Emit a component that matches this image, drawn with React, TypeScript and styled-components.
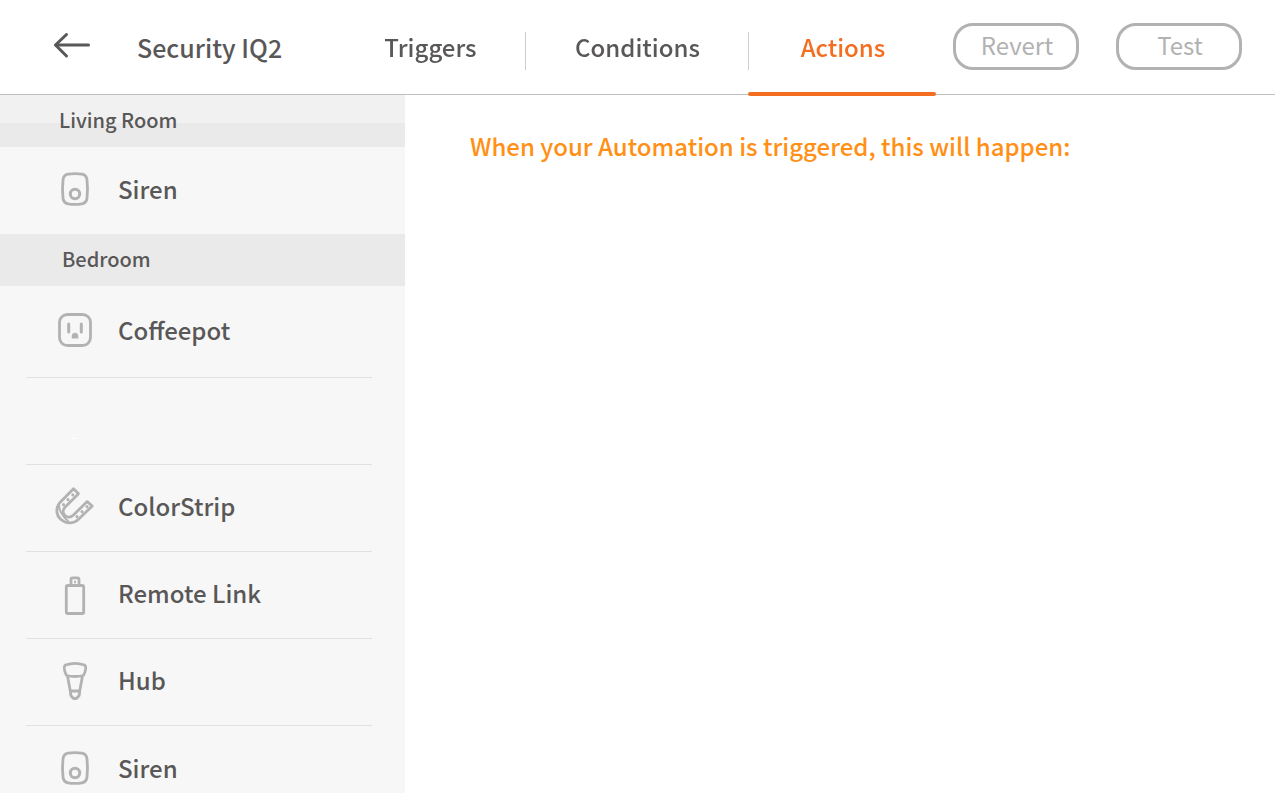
import React from "react";
import styled, { createGlobalStyle } from "styled-components";

const GlobalStyle = createGlobalStyle`
  *, *::before, *::after { box-sizing: border-box; }
  body {
    margin: 0;
    background: #fff;
    color: #595757;
    font-family: "Noto Sans CJK SC", "Open Sans", sans-serif;
    font-weight: 500;
  }
`;

const Shell = styled.div`
  display: flex;
  flex-direction: column;
  height: 100vh;
`;

const Header = styled.header`
  display: flex;
  flex: none;
  height: 95px;
  padding-right: 33px;
  border-bottom: 1px solid #bfbfbf;
`;

const BackButton = styled.button`
  align-self: flex-start;
  margin: 31px 46px 0 53px;
  padding: 0;
  border: 0;
  background: none;
  color: inherit;
  line-height: 0;
  cursor: pointer;
`;

const Title = styled.h1`
  flex: none;
  width: 197px;
  margin: 0;
  font-size: 25px;
  font-weight: 500;
  line-height: 94px;
  white-space: nowrap;
`;

const Tabs = styled.nav`
  display: flex;
  height: 96px;
`;

const Tab = styled.a<{ $width: number; $active?: boolean }>`
  position: relative;
  width: ${(p) => p.$width}px;
  padding-left: 2px;
  color: ${(p) => (p.$active ? "#f36e21" : "inherit")};
  font-size: 24px;
  line-height: 94px;
  text-align: center;
  text-decoration: none;

  &:not(:first-child)::before {
    content: "";
    position: absolute;
    top: 32px;
    left: 0;
    width: 1px;
    height: 38px;
    background: #cfcfcf;
  }

  &[aria-current="page"]::after {
    content: "";
    position: absolute;
    right: 0;
    bottom: 0;
    left: 0;
    height: 4px;
    border-radius: 2px;
    background: #f36e21;
  }
`;

const Buttons = styled.div`
  display: flex;
  gap: 37px;
  margin: 23px 0 0 auto;
`;

const PillButton = styled.button`
  width: 126px;
  height: 47px;
  padding: 0 0 4px 2px;
  border: 3px solid #b2b2b2;
  border-radius: 20px;
  background: none;
  color: #b2b2b2;
  font-family: inherit;
  font-size: 24px;
  line-height: 36px;
  cursor: pointer;
`;

const Body = styled.div`
  display: flex;
  flex: 1;
  min-height: 0;
`;

const Sidebar = styled.aside`
  flex: none;
  width: 405px;
  overflow-y: auto;
  scrollbar-width: none;
  background: #f7f7f7;
`;

const RoomName = styled.h2<{ $faded?: boolean }>`
  height: 52px;
  margin: 0;
  padding-left: ${(p) => (p.$faded ? 59 : 62)}px;
  background: ${(p) => (p.$faded ? "linear-gradient(#f1f1f1 28px, #eaeaea 28px)" : "#eaeaea")};
  font-size: 20px;
  font-weight: 500;
  line-height: 50px;
`;

const DeviceList = styled.ul`
  margin: 0;
  padding: 0 33px 0 26px;
  list-style: none;
`;

const Device = styled.li<{ $tall?: boolean }>`
  display: flex;
  align-items: center;
  height: ${(p) => (p.$tall ? 92 : 87)}px;
  padding-bottom: 4px;
  border-bottom: 1px solid #e1e1e1;
  font-size: 24px;
  line-height: 40px;

  &:last-child { border-bottom: 0; }
`;

const DeviceIcon = styled.svg`
  flex: none;
  width: 40px;
  height: 40px;
  margin: 0 23px 0 29px;
  overflow: visible;
  fill: none;
  stroke: #b2b2b2;
  stroke-width: 3;
  stroke-linejoin: round;
  stroke-linecap: round;
`;

const EmptyMark = styled.span`
  width: 6px;
  height: 1px;
  margin: 38px 0 0 45px;
  background: #fff;
`;

const Content = styled.main`
  flex: 1;
  padding: 27px 65px;
`;

const Prompt = styled.h2`
  margin: 0;
  color: #ff9015;
  font-size: 24px;
  font-weight: 500;
  line-height: 48px;
`;

type Kind = "siren" | "outlet" | "strip" | "link" | "bulb";

const drawings: Record<Kind, React.ReactNode> = {
  siren: (
    <>
      <path d="M13 5.2Q20 4 27 5.2Q31.500 6 32 11Q33 20 32 29Q31.500 34 27 34.800Q20 36 13 34.800Q8.500 34 8 29Q7 20 8 11Q8.500 6 13 5.200Z" strokeWidth="2.800" />
      <circle cx="20" cy="25" r="4.700" />
    </>
  ),
  outlet: (
    <>
      <rect x="4.500" y="4.500" width="31" height="31" rx="8" strokeWidth="2.800" />
      <path d="M13.700 14V22M26.300 14V22" />
      <path d="M17 28V26A3 3 0 0 1 23 26V28Z" fill="#b2b2b2" stroke="#b2b2b2" strokeWidth="0.500" />
    </>
  ),
  strip: (
    <>
      <path d="M18.500 2.800L4.500 17C.5 22 1 29.500 6 33.500C11 38 18.500 38 23 33.800L37.200 20L32.200 15.600L18.500 29C15.500 32 12 31.500 9.700 29.300C7.500 27 7.500 23.500 10.200 21L23.500 7.800Z" strokeWidth="2.800" />
      <path d="M4 19Q4 27 13 35" strokeWidth="2" />
      <path d="M17.800 8.700V9M13 13.500V13.800M8.500 18.500V18.800M32 20.500V20.800M27 25.500V25.800M22 30.500V30.800" strokeWidth="3" />
    </>
  ),
  link: (
    <>
      <rect x="11.300" y="12.500" width="17.400" height="28" rx="1.500" strokeWidth="2.800" />
      <path d="M16 12.500V6.500Q16 4.800 17.500 4.800H22.500Q24 4.800 24 6.500V12.500" strokeWidth="2.800" />
      <path d="M20 8.500V9.500" strokeWidth="2" />
    </>
  ),
  bulb: (
    <path d="M11.500 15.500Q7.500 7 10.500 5Q20 1.800 29.500 5Q32.500 7 28.500 15.500Q20 17.500 11.500 15.500ZM12.500 16L15.300 31H24.700L27.500 16M15.300 31L15.800 35.500L18.500 38.500H21.500L24.200 35.500L24.700 31" strokeWidth="2.800" />
  ),
};

function DeviceRow({ kind, name, tall }: { kind: Kind; name: string; tall?: boolean }) {
  return (
    <Device $tall={tall}>
      <DeviceIcon viewBox="0 0 40 40" aria-hidden="true">{drawings[kind]}</DeviceIcon>
      {name}
    </Device>
  );
}

export default function App() {
  return (
    <Shell>
      <GlobalStyle />
      <Header>
        <BackButton aria-label="Back">
          <svg width="38" height="28" viewBox="0 0 38 28" fill="none" stroke="currentColor" strokeWidth="3" strokeLinecap="round" strokeLinejoin="round">
            <path d="M13.500 3.500L2.500 14L13.500 25" />
            <path d="M3 14H35.500" />
          </svg>
        </BackButton>
        <Title>Security IQ2</Title>
        <Tabs>
          <Tab href="#triggers" $width={191}>Triggers</Tab>
          <Tab href="#conditions" $width={223}>Conditions</Tab>
          <Tab href="#actions" $width={188} $active aria-current="page">Actions</Tab>
        </Tabs>
        <Buttons>
          <PillButton>Revert</PillButton>
          <PillButton>Test</PillButton>
        </Buttons>
      </Header>
      <Body>
        <Sidebar>
          <RoomName $faded>Living Room</RoomName>
          <DeviceList>
            <DeviceRow kind="siren" name="Siren" />
          </DeviceList>
          <RoomName>Bedroom</RoomName>
          <DeviceList>
            <DeviceRow kind="outlet" name="Coffeepot" tall />
            <Device><EmptyMark /></Device>
            <DeviceRow kind="strip" name="ColorStrip" />
            <DeviceRow kind="link" name="Remote Link" />
            <DeviceRow kind="bulb" name="Hub" />
            <DeviceRow kind="siren" name="Siren" />
          </DeviceList>
        </Sidebar>
        <Content>
          <Prompt>When your Automation is triggered, this will happen:</Prompt>
        </Content>
      </Body>
    </Shell>
  );
}
